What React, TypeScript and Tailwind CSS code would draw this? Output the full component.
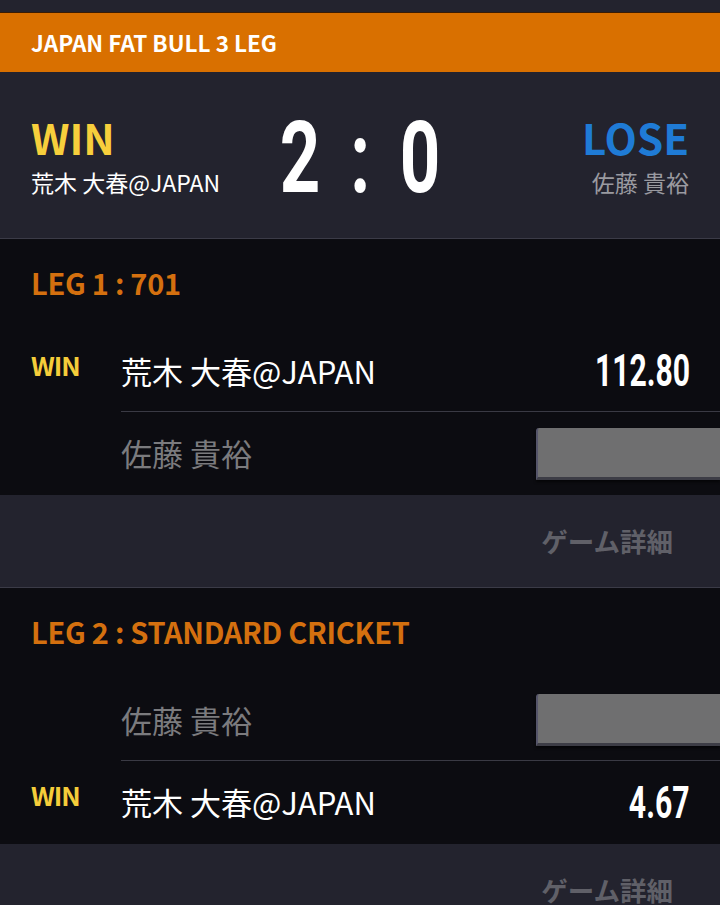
import React from 'react';

const jp = "font-['Noto_Sans_CJK_JP','Noto_Sans',sans-serif]";
const num = "font-['Roboto','Liberation_Sans',sans-serif]";

type Row = { win: boolean; name: string; score?: string };

const legs: { title: string; rows: Row[] }[] = [
  {
    title: 'LEG 1 : 701',
    rows: [
      { win: true, name: '荒木 大春@JAPAN', score: '112.80' },
      { win: false, name: '佐藤 貴裕' },
    ],
  },
  {
    title: 'LEG 2 : STANDARD CRICKET',
    rows: [
      { win: false, name: '佐藤 貴裕' },
      { win: true, name: '荒木 大春@JAPAN', score: '4.67' },
    ],
  },
];

function HiddenScore() {
  return (
    <div className="ml-auto h-[52px] w-[184px] rounded-tl-[3px] border-b-[3px] border-l-[2px] border-b-[#3d3d46] border-l-[#55556a] bg-[#6f6f70] shadow-[0_2px_3px_rgba(0,0,0,0.6)]" />
  );
}

function Leg({ title, rows }: { title: string; rows: Row[] }) {
  return (
    <div className="bg-[#0c0c11] pt-[23px]">
      <div className={`${jp} h-[40px] pl-[31px] text-[29px] font-bold leading-[40px] tracking-[-0.01em] text-[#d4700f]`}>
        {title}
      </div>
      <div className="mt-[29px]">
        {rows.map((row, i) => (
          <div key={i} className="flex">
            <div className={`${jp} w-[121px] shrink-0 pl-[31px] pt-[14px] text-[26px] font-bold tracking-[-0.04em] text-[#f5cd3a]`}>
              {row.win ? 'WIN' : ''}
            </div>
            <div className={`flex flex-1 items-center ${i === 0 ? 'h-[81px] border-b border-[#3a3a44]' : 'h-[83px]'}`}>
              <span className={`${jp} text-[31px] ${row.win ? 'text-white' : 'text-[#7b7b7e]'}`}>{row.name}</span>
              {row.score ? (
                <span className={`${num} ml-auto mr-[30px] inline-block origin-right scale-x-[0.67] text-[45px] font-bold text-white`}>
                  {row.score}
                </span>
              ) : (
                <HiddenScore />
              )}
            </div>
          </div>
        ))}
      </div>
    </div>
  );
}

function Detail() {
  return (
    <div className="flex h-[93px] items-center justify-end border-b border-[#3b3b47] bg-[#23232e] pr-[47px]">
      <span className={`${jp} text-[26.5px] font-bold text-[#606068]`}>ゲーム詳細</span>
    </div>
  );
}

function ScoreChar({ c }: { c: string }) {
  return (
    <div className="flex w-[36px] justify-center">
      <span className={`${num} inline-block scale-x-[0.7] text-[101px] font-bold leading-none text-white`}>{c}</span>
    </div>
  );
}

export default function App() {
  return (
    <div className="min-h-[905px] w-[720px] overflow-hidden bg-[#23232e]">
      <div className="h-[13px] border-b border-[#3a1c04] bg-[#23232e]" />
      <div className={`${jp} flex h-[59px] items-center bg-[#d97000] pl-[31px] text-[22.5px] font-bold text-white`}>
        JAPAN FAT BULL 3 LEG
      </div>

      <div className="flex h-[167px] items-center border-b border-[#3b3b47] bg-[#23232e] px-[31px]">
        <div className="w-[220px]">
          <div className={`${jp} text-[42px] font-bold leading-[52px] text-[#f7cf3c]`}>WIN</div>
          <div className={`${jp} mt-[2px] text-[23px] text-white`}>荒木 大春@JAPAN</div>
        </div>
        <div className="flex flex-1 items-center justify-center gap-[24px] pt-[4px]">
          <ScoreChar c="2" />
          <ScoreChar c=":" />
          <ScoreChar c="0" />
        </div>
        <div className="w-[220px] text-right">
          <div className={`${jp} text-[42px] font-bold leading-[52px] text-[#1f7bd6]`}>LOSE</div>
          <div className={`${jp} mt-[2px] text-[23px] text-[#9a9aa0]`}>佐藤 貴裕</div>
        </div>
      </div>

      {legs.map((leg) => (
        <React.Fragment key={leg.title}>
          <Leg title={leg.title} rows={leg.rows} />
          <Detail />
        </React.Fragment>
      ))}
    </div>
  );
}
